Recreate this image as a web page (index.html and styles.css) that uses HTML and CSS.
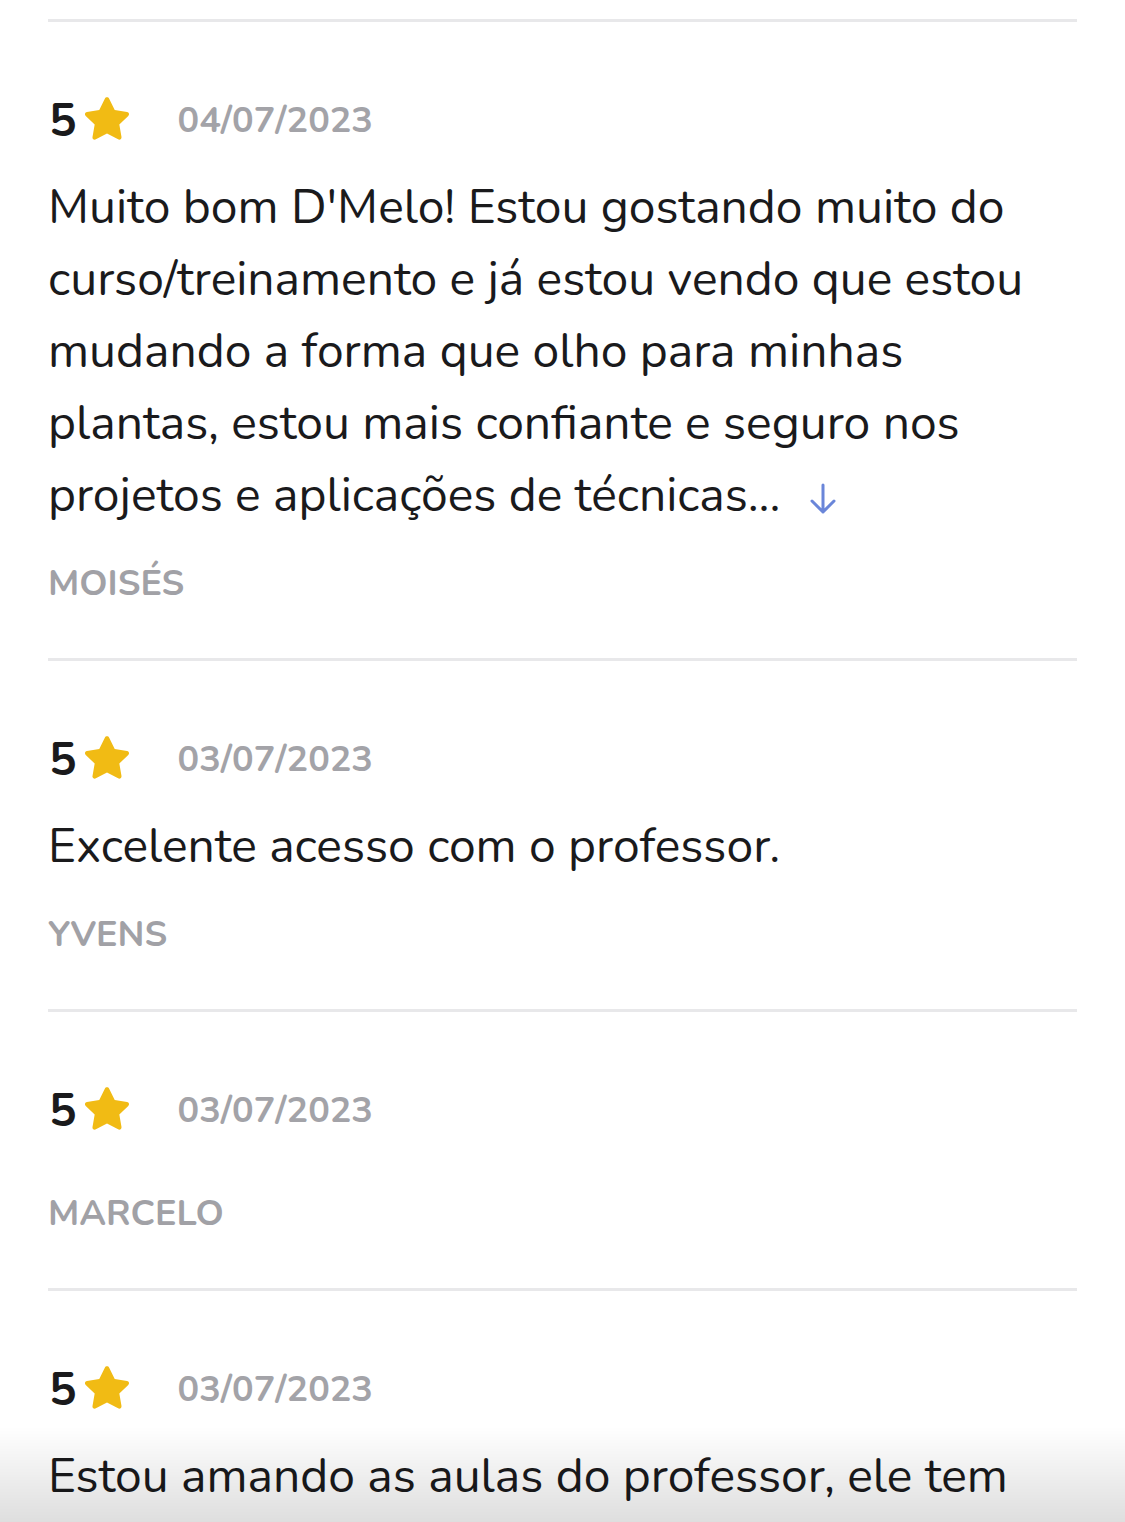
FILE: index.html
```html
<!DOCTYPE html>
<html lang="pt-BR">
<head>
    <meta charset="UTF-8">
    <meta name="viewport" content="width=device-width, initial-scale=1.0">
    <title>Avaliações</title>
    <link rel="stylesheet" href="styles.css">
</head>
<body>
    <div class="reviews">
        <div class="review">
            <div class="rating">
                <span class="score">5</span>
                <svg class="star" viewBox="0 0 24 24"><path d="M12 2.6c.4 0 .7.2.9.6l2.3 4.7 5.1.8c.8.1 1.1 1.1.5 1.6l-3.7 3.6.9 5.1c.1.8-.7 1.4-1.4 1l-4.6-2.4-4.6 2.4c-.7.4-1.6-.2-1.4-1l.9-5.1-3.7-3.6c-.6-.5-.3-1.5.5-1.6l5.1-.8 2.3-4.7c.2-.4.5-.6.9-.6z"/></svg>
                <span class="date">04/07/2023</span>
            </div>
            <p class="text">Muito bom D'Melo! Estou gostando muito do curso/treinamento e já estou vendo que estou mudando a forma que olho para minhas plantas, estou mais confiante e seguro nos projetos e aplicações de técnicas... <svg class="more" viewBox="0 0 26 32"><path d="M13 2v27M2 18l11 11 11-11"/></svg></p>
            <div class="name">Moisés</div>
        </div>

        <div class="review">
            <div class="rating">
                <span class="score">5</span>
                <svg class="star" viewBox="0 0 24 24"><path d="M12 2.6c.4 0 .7.2.9.6l2.3 4.7 5.1.8c.8.1 1.1 1.1.5 1.6l-3.7 3.6.9 5.1c.1.8-.7 1.4-1.4 1l-4.6-2.4-4.6 2.4c-.7.4-1.6-.2-1.4-1l.9-5.1-3.7-3.6c-.6-.5-.3-1.5.5-1.6l5.1-.8 2.3-4.7c.2-.4.5-.6.9-.6z"/></svg>
                <span class="date">03/07/2023</span>
            </div>
            <p class="text">Excelente acesso com o professor.</p>
            <div class="name">Yvens</div>
        </div>

        <div class="review">
            <div class="rating">
                <span class="score">5</span>
                <svg class="star" viewBox="0 0 24 24"><path d="M12 2.6c.4 0 .7.2.9.6l2.3 4.7 5.1.8c.8.1 1.1 1.1.5 1.6l-3.7 3.6.9 5.1c.1.8-.7 1.4-1.4 1l-4.6-2.4-4.6 2.4c-.7.4-1.6-.2-1.4-1l.9-5.1-3.7-3.6c-.6-.5-.3-1.5.5-1.6l5.1-.8 2.3-4.7c.2-.4.5-.6.9-.6z"/></svg>
                <span class="date">03/07/2023</span>
            </div>
            <div class="name">Marcelo</div>
        </div>

        <div class="review">
            <div class="rating">
                <span class="score">5</span>
                <svg class="star" viewBox="0 0 24 24"><path d="M12 2.6c.4 0 .7.2.9.6l2.3 4.7 5.1.8c.8.1 1.1 1.1.5 1.6l-3.7 3.6.9 5.1c.1.8-.7 1.4-1.4 1l-4.6-2.4-4.6 2.4c-.7.4-1.6-.2-1.4-1l.9-5.1-3.7-3.6c-.6-.5-.3-1.5.5-1.6l5.1-.8 2.3-4.7c.2-.4.5-.6.9-.6z"/></svg>
                <span class="date">03/07/2023</span>
            </div>
            <p class="text">Estou amando as aulas do professor, ele tem</p>
        </div>
    </div>
    <div class="fade"></div>
</body>
</html>
```

FILE: styles.css
```css
html, body {
    margin: 0;
    height: 100%;
    overflow: hidden;
}

body {
    font-family: "Nunito", "Lato", sans-serif;
    background-color: #fff;
    color: #1a1a1c;
}

.reviews {
    padding: 19px 48px 0 48px;
}

.review {
    display: flex;
    flex-direction: column;
    border-top: 3px solid #e8e8ea;
    padding: 68px 0 50px 0;
}

.rating {
    display: flex;
    align-items: center;
    height: 60px;
    margin-bottom: 21px;
}

.score {
    font-size: 46px;
    font-weight: 700;
    color: #1a1a1c;
    margin-left: 1px;
}

.star {
    width: 58px;
    height: 58px;
    margin-left: 1px;
    fill: #f1bb14;
}

.date {
    font-size: 36px;
    font-weight: 700;
    color: #a3a3a8;
    margin-left: 42px;
}

.text {
    margin: 0;
    font-size: 48px;
    line-height: 72px;
}

.more {
    width: 26px;
    height: 32px;
    margin-left: 17px;
    vertical-align: -4px;
    fill: none;
    stroke: #6a86d9;
    stroke-width: 3;
    stroke-linecap: round;
    stroke-linejoin: round;
}

.name {
    margin-top: 29px;
    font-size: 36px;
    line-height: 48px;
    font-weight: 700;
    color: #a1a1a6;
    text-transform: uppercase;
}

.fade {
    position: fixed;
    left: 0;
    right: 0;
    bottom: 0;
    height: 95px;
    background: linear-gradient(to bottom, rgba(0, 0, 0, 0), rgba(0, 0, 0, 0.13));
    pointer-events: none;
}
```
